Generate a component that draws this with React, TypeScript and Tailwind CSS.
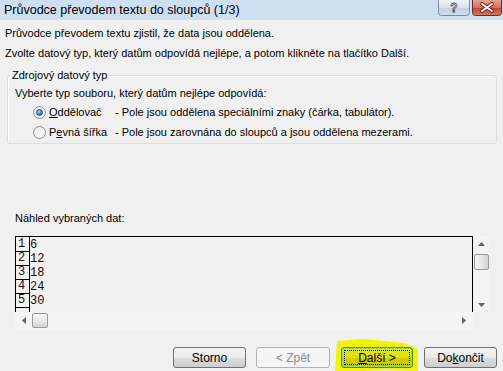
import React from 'react';

const font = { fontFamily: '"Liberation Sans", Arial, sans-serif' };

function Radio({ checked }: { checked?: boolean }) {
  return (
    <span className="relative flex h-[13px] w-[13px] items-center justify-center rounded-full border border-[#8e8f8f] bg-gradient-to-br from-[#e6e6e6] to-[#ffffff]">
      {checked && (
        <span className="h-[7px] w-[7px] rounded-full border border-[#1c5180] bg-[radial-gradient(circle_at_35%_35%,#a6e0ff,#2f7fc1_60%,#1b4f8a)]" />
      )}
    </span>
  );
}

function Btn({ children, disabled }: { children: React.ReactNode; disabled?: boolean }) {
  return (
    <button
      className={
        disabled
          ? 'h-[21px] w-[74px] rounded-[3px] border border-[#adb2b5] bg-[#f4f4f4] text-[12px] text-[#8d8d8d]'
          : 'h-[21px] w-[73px] rounded-[3px] border border-[#707070] bg-[linear-gradient(#f2f2f2_0%,#ebebeb_50%,#dddddd_50%,#cfcfcf_100%)] text-[12px] text-black'
      }
    >
      {children}
    </button>
  );
}

function HelpButton() {
  return (
    <svg width="32" height="16" viewBox="0 0 32 16">
      <defs>
        <linearGradient id="hb" x1="0" y1="0" x2="0" y2="1">
          <stop offset="0" stopColor="#eef3f9" />
          <stop offset="0.5" stopColor="#d6e1ee" />
          <stop offset="0.51" stopColor="#c2d1e3" />
          <stop offset="1" stopColor="#d0ddec" />
        </linearGradient>
      </defs>
      <path d="M0.5 0 V12.5 Q0.5 15.5 3.5 15.5 H28.5 Q31.5 15.5 31.5 12.5 V0" fill="url(#hb)" stroke="#7a8ba3" />
      <text x="16" y="12" textAnchor="middle" fontFamily="Liberation Sans, sans-serif" fontSize="12" fontWeight="bold" fill="#ffffff" stroke="#3b4d66" strokeWidth="0.8">?</text>
    </svg>
  );
}

function CloseButton() {
  return (
    <svg width="30" height="16" viewBox="0 0 30 16">
      <defs>
        <linearGradient id="cb" x1="0" y1="0" x2="0" y2="1">
          <stop offset="0" stopColor="#e8a494" />
          <stop offset="0.5" stopColor="#d3705d" />
          <stop offset="0.51" stopColor="#c0432e" />
          <stop offset="1" stopColor="#d67a62" />
        </linearGradient>
      </defs>
      <path d="M0.5 0 V12.5 Q0.5 15.5 3.5 15.5 H26.5 Q29.5 15.5 29.5 12.5 V0" fill="url(#cb)" stroke="#6b2b22" />
      <path d="M10 4 L20 11 M20 4 L10 11" stroke="#5a1a12" strokeWidth="3.6" strokeLinecap="round" />
      <path d="M10 4 L20 11 M20 4 L10 11" stroke="#ffffff" strokeWidth="2" strokeLinecap="round" />
    </svg>
  );
}

export default function App() {
  const rows = ['6', '12', '18', '24', '30', ''];

  return (
    <div className="relative flex h-[371px] w-[503px] flex-col overflow-hidden bg-[#f0f0f0] text-[11px] text-black" style={font}>
      {/* title bar */}
      <div className="flex h-[20px] shrink-0 items-start justify-between bg-[#cfdff2]">
        <span className="pl-[4px] pt-[2px] text-[12.5px] leading-[16px]">Průvodce převodem textu do sloupců (1/3)</span>
        <div className="flex gap-[2px] pr-[1px]">
          <HelpButton />
          <CloseButton />
        </div>
      </div>

      {/* intro text */}
      <div className="px-[5px] pt-[3px] leading-[20px]">
        <p>Průvodce převodem textu zjistil, že data jsou oddělena.</p>
        <p>Zvolte datový typ, který datům odpovídá nejlépe, a potom klikněte na tlačítko Další.</p>
      </div>

      {/* group box */}
      <fieldset className="ml-[7px] mt-[5px] h-[76px] w-[490px] rounded-[3px] border border-[#d5dfe5] shadow-[inset_1px_1px_0_#ffffff]">
        <legend className="ml-[2px] px-[2px] leading-[14px]">Zdrojový datový typ</legend>
        <div className="pl-[7px] pt-[4px] leading-[14px]">Vyberte typ souboru, který datům nejlépe odpovídá:</div>
        <div className="mt-[2px] flex h-[20px] items-center pl-[25px]">
          <Radio checked />
          <span className="ml-[3px] w-[66px]">
            <span className="underline">O</span>ddělovač
          </span>
          <span>- Pole jsou oddělena speciálními znaky (čárka, tabulátor).</span>
        </div>
        <div className="flex h-[20px] items-center pl-[25px]">
          <Radio />
          <span className="ml-[3px] w-[66px]">
            P<span className="underline">e</span>vná šířka
          </span>
          <span>- Pole jsou zarovnána do sloupců a jsou oddělena mezerami.</span>
        </div>
      </fieldset>

      {/* preview */}
      <div className="ml-[15px] mt-[67px] leading-[14px]">Náhled vybraných dat:</div>
      <div className="ml-[15px] mt-[11px] grid w-[474px] grid-cols-[458px_16px] grid-rows-[76px_17px]">
        <div className="overflow-hidden border-l border-r border-t border-black bg-[#f2f2f2] font-['Liberation_Mono',monospace] text-[12px] text-[#1a0a0a]">
          {rows.map((r, i) => (
            <div key={i} className={`flex ${i === 0 ? 'h-[15px]' : 'h-[14px]'}`}>
              <div className={`flex w-[14px] items-end border-r border-black pl-[2px] leading-[13px] ${r ? 'border-b' : ''}`}>
                {r ? i + 1 : ''}
              </div>
              <div className="flex items-end leading-[13px]">{r}</div>
            </div>
          ))}
        </div>
        {/* vertical scrollbar */}
        <div className="flex flex-col items-center bg-[#f4f4f4] pt-[6px]">
          <svg width="7" height="4" viewBox="0 0 7 4">
            <path d="M0 4 L3.5 0 L7 4 Z" fill="#606060" />
          </svg>
          <div className="mt-[8px] h-[16px] w-[15px] rounded-[2px] border border-[#9a9a9a] bg-gradient-to-r from-[#f5f5f5] via-[#e8e8e8] to-[#d2d2d2]" />
          <div className="flex-1" />
          <svg className="mb-[5px]" width="7" height="4" viewBox="0 0 7 4">
            <path d="M0 0 L7 0 L3.5 4 Z" fill="#606060" />
          </svg>
        </div>
        {/* horizontal scrollbar */}
        <div className="flex items-center bg-[#f4f4f4] pl-[7px] pr-[7px]">
          <svg width="4" height="7" viewBox="0 0 4 7">
            <path d="M4 0 L4 7 L0 3.5 Z" fill="#606060" />
          </svg>
          <div className="ml-[6px] h-[15px] w-[16px] rounded-[2px] border border-[#9a9a9a] bg-gradient-to-b from-[#f5f5f5] via-[#e8e8e8] to-[#d2d2d2]" />
          <div className="flex-1" />
          <svg width="4" height="7" viewBox="0 0 4 7">
            <path d="M0 0 L4 3.5 L0 7 Z" fill="#606060" />
          </svg>
        </div>
        <div />
      </div>

      {/* buttons */}
      <div className="mt-[18px] flex items-center pl-[173px]">
        <Btn>Storno</Btn>
        <div className="ml-[10px]">
          <Btn disabled>&lt; Zpět</Btn>
        </div>
        <div className="relative ml-[11px]">
          <svg className="absolute -left-[7px] -top-[10px]" width="86" height="36" viewBox="0 0 86 36">
            <path d="M3 4 L30 2 L70 6 L84 12 L84 34 L50 33 L10 35 L1 34 Z" fill="#f2f20a" />
          </svg>
          <button className="relative h-[21px] w-[72px] rounded-[3px] border border-[#3c9b2f] bg-[linear-gradient(#e6e628_0%,#dede10_50%,#cfcf00_50%,#c8c800_100%)] p-[2px] text-[12px] text-black shadow-[inset_0_0_0_1px_#9bd66b]">
            <span className="flex h-full w-full items-center justify-center border border-dotted border-black">
              <span className="underline">D</span>alší &gt;
            </span>
          </button>
        </div>
        <div className="ml-[11px]">
          <Btn>
            Do<span className="underline">k</span>ončit
          </Btn>
        </div>
      </div>
    </div>
  );
}
